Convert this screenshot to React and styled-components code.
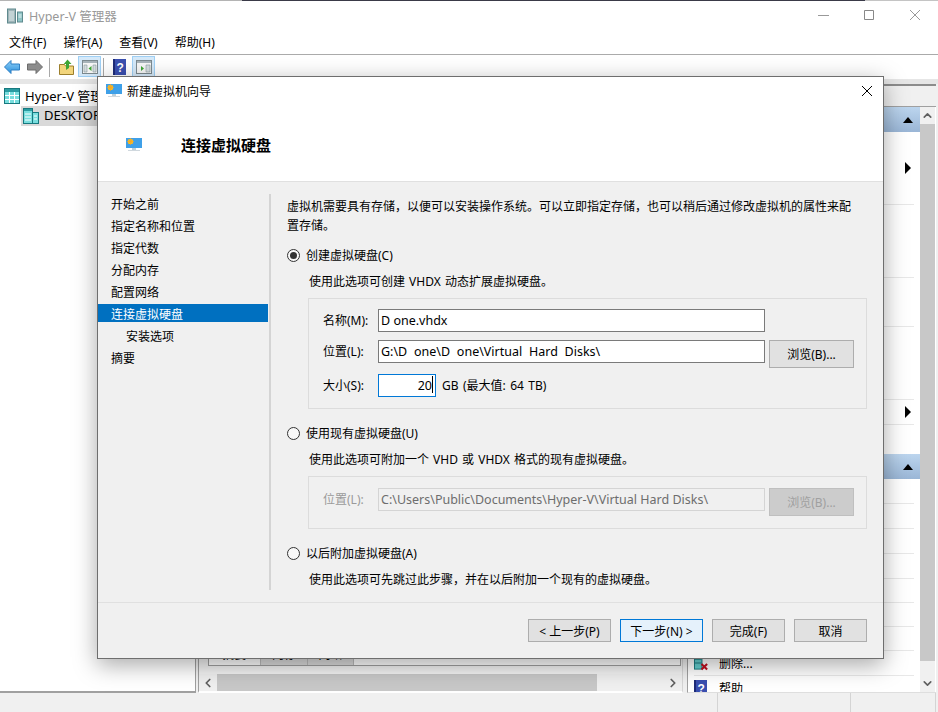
import React from 'react';
import styled, { createGlobalStyle } from 'styled-components';
import { ChevronUp, ChevronDown, ChevronLeft, ChevronRight } from 'lucide-react';

const GlobalStyle = createGlobalStyle`
  html, body { margin: 0; padding: 0; background: #f0f0f0; }
  * { box-sizing: border-box; }
  body {
    font-family: "Noto Sans", "Noto Sans CJK SC", sans-serif;
    font-size: 12px;
    color: #000;
  }
`;

// ######################### Main window ################################

const Screen = styled.div`
  position: relative;
  width: 938px;
  height: 712px;
  overflow: hidden;
  display: flex;
  flex-direction: column;
  background: #f0f0f0;
`;

const TopEdge = styled.div`
  height: 1px;
  flex: none;
  background: linear-gradient(to right, #b4b4b4 242px, #3a3a48 242px, #3a3a48 865px, #c4c4c4 865px);
`;

const TitleBar = styled.div`
  height: 29px;
  flex: none;
  background: #fff;
  display: flex;
  align-items: center;
  padding-left: 7px;
`;

const AppTitle = styled.span`
  margin-left: 6px;
  font-size: 12.5px;
  color: #999;
  flex: 1;
`;

const WinButton = styled.div`
  width: 46px;
  height: 29px;
  display: flex;
  align-items: center;
  justify-content: center;
  padding-bottom: 1px;
`;

const MenuBar = styled.div`
  height: 25px;
  flex: none;
  background: #fff;
  border-bottom: 1px solid #aaa;
  display: flex;
  align-items: center;
  gap: 17px;
  padding: 0 0 1px 9px;
`;

const ToolBar = styled.div`
  height: 24px;
  flex: none;
  background: #fff;
  display: flex;
  align-items: flex-start;
  padding: 1px 0 0 4px;
`;

const ToolIcon = styled.div`
  margin-left: ${p => p.$ml || 0}px;
  height: 21px;
  width: ${p => p.$w}px;
  display: flex;
  align-items: center;
  justify-content: center;
  ${p => p.$on && 'background: #d5e9f9; border: 1px solid #9fd0f5;'}
`;

const ToolSep = styled.div`
  margin-left: ${p => p.$ml}px;
  width: 1px;
  height: 19px;
  margin-top: 2px;
  background: #a8a8a8;
`;

const PaneBand = styled.div`
  height: 5px;
  flex: none;
  background: #e6e6e6;
`;

const Panes = styled.div`
  flex: 1;
  min-height: 0;
  display: flex;
`;

const TreePane = styled.div`
  width: 196px;
  flex: none;
  background: #fff;
  border-right: 1px solid #a0a0a0;
  border-bottom: 2px solid #a0a0a0;
  padding: 2px 0 0 4px;
`;

const TreeRow = styled.div`
  height: 20px;
  display: flex;
  align-items: center;
  gap: 5px;
  margin-left: ${p => p.$indent || 0}px;
  padding-left: ${p => (p.$selected ? 2 : 0)}px;
  background: ${p => (p.$selected ? '#d9d9d9' : 'transparent')};
  font-size: 13px;
  white-space: nowrap;
`;

const TreeLabel = styled.span`
  margin-top: -2px;
`;

const CenterPane = styled.div`
  width: 485px;
  flex: none;
  margin-left: 2px;
  background: #f3f3f3;
  border-left: 1px solid #a0a0a0;
  border-right: 1px solid #d6d6d6;
  border-bottom: 2px solid #fff;
  display: flex;
  flex-direction: column;
`;

const TabBox = styled.div`
  flex: 1;
  margin: 0 1px 0 9px;
  background: #fff;
  border: 1px solid #a0a0a0;
  display: flex;
  align-items: flex-end;
`;

const BottomTab = styled.div`
  width: ${p => p.$w}px;
  height: 26px;
  padding-top: 6px;
  text-align: center;
  background: ${p => (p.$active ? '#fff' : '#dcdcdc')};
  border-right: 1px solid #bdbdbd;
`;

const HScroll = styled.div`
  height: 17px;
  flex: none;
  margin-top: 8px;
  display: flex;
  align-items: stretch;
  background: #f0f0f0;
`;

const HThumb = styled.div`
  width: 380px;
  background: #c8c8c8;
`;

const ScrollArrow = styled.div`
  width: ${p => p.$w || 18}px;
  height: ${p => p.$h || 'auto'};
  padding-top: ${p => p.$pt || 0}px;
  flex: none;
  display: flex;
  align-items: center;
  justify-content: center;
  color: #606060;
`;

const Spacer = styled.div`
  flex: 1;
`;

const ActionPane = styled.div`
  width: 249px;
  flex: none;
  margin-left: 4px;
  background: #fff;
  border-left: 1px solid #a0a0a0;
  border-bottom: 1px solid #dedede;
  display: flex;
  flex-direction: column;
  overflow: hidden;
`;

const ActionHead = styled.div`
  height: 23px;
  flex: none;
  background: #f0f0f0;
  border-top: 2px solid #8c8c8c;
  border-bottom: 1px solid #a0a0a0;
`;

const ActionBody = styled.div`
  flex: 1;
  min-height: 0;
  display: flex;
`;

const ActionList = styled.div`
  width: 232px;
  flex: none;
  overflow: hidden;
`;

const BlueHead = styled.div`
  height: 25px;
  background: linear-gradient(#bcd5ee, #9ab6d6);
  display: flex;
  align-items: center;
  justify-content: flex-end;
  padding-right: 7px;
`;

const ActionRow = styled.div`
  height: ${p => p.$h}px;
  margin: 0 6px 0 6px;
  display: flex;
  align-items: center;
  gap: 10px;
  padding-right: 3px;
  border-bottom: 1px solid ${p => (p.$plain ? 'transparent' : '#e8e8e8')};
  white-space: nowrap;
`;

const ActionIcon = styled.span`
  width: 15px;
  flex: none;
  display: flex;
`;

const ActionText = styled.span`
  flex: 1;
`;

const VScroll = styled.div`
  width: 15px;
  flex: none;
  display: flex;
  flex-direction: column;
  background: #f0f0f0;
`;

const VThumb = styled.div`
  flex: 1;
  background: #c8c8c8;
`;

const StatusBar = styled.div`
  height: 19px;
  flex: none;
  background: #f0f0f0;
  display: flex;
`;

const StatusCell = styled.div`
  width: ${p => p.$w}px;
  flex: none;
  border-right: 1px solid #d4d4d4;
`;

// ######################### Wizard dialog ################################

const Dialog = styled.div`
  position: absolute;
  left: 97px;
  top: 76px;
  width: 787px;
  height: 583px;
  background: #f0f0f0;
  border: 1px solid #6e6e6e;
  box-shadow: 0 6px 22px rgba(0, 0, 0, 0.34);
  display: flex;
  flex-direction: column;
`;

const DialogHead = styled.div`
  height: 105px;
  flex: none;
  background: #fff;
  border-bottom: 1px solid #e0e0e0;
`;

const DialogTitle = styled.div`
  height: 28px;
  display: flex;
  align-items: center;
  padding: 0 10px 0 8px;
  gap: 5px;
`;

const DialogTitleText = styled.span`
  flex: 1;
`;

const HeadLine = styled.div`
  display: flex;
  align-items: center;
  height: 24px;
  margin-top: 28px;
  padding-left: 28px;
`;

const Heading = styled.h1`
  margin: 0 0 0 39px;
  font-size: 15px;
  font-weight: 700;
  line-height: 24px;
`;

const DialogBody = styled.div`
  height: 420px;
  flex: none;
  display: flex;
  padding: 12px 0;
`;

const Steps = styled.div`
  width: 173px;
  flex: none;
  border-right: 2px solid #d4d4d4;
`;

const Step = styled.div`
  height: 18px;
  line-height: 21px;
  margin: 0 1px 4px 0;
  padding-left: ${p => (p.$sub ? 28 : 13)}px;
  background: ${p => (p.$active ? '#0070c0' : 'transparent')};
  color: ${p => (p.$active ? '#fff' : '#000')};
`;

const Main = styled.div`
  flex: 1;
  padding: 3px 16px 0 16px;
`;

const Intro = styled.p`
  margin: 0;
  line-height: 19px;
`;

const RadioRow = styled.label`
  display: flex;
  align-items: center;
  gap: 6px;
  height: 18px;
  margin-top: ${p => p.$mt}px;
`;

const RadioMark = styled.span`
  width: 13px;
  height: 13px;
  flex: none;
  border: 1px solid #333;
  border-radius: 50%;
  background: #f8f8f8;
  display: flex;
  align-items: center;
  justify-content: center;
  &::after {
    content: '';
    width: 7px;
    height: 7px;
    border-radius: 50%;
    background: ${p => (p.$on ? '#333' : 'transparent')};
  }
`;

const Hint = styled.div`
  height: 18px;
  line-height: 18px;
  margin-top: ${p => p.$mt}px;
  padding-left: 22px;
  word-spacing: 1px;
`;

const Group = styled.div`
  margin: ${p => p.$mt}px 0 0 21px;
  padding: ${p => p.$pad};
  border: 1px solid #dcdcdc;
`;

const FieldRow = styled.div`
  display: flex;
  align-items: flex-start;
  height: ${p => p.$h}px;
  margin-bottom: ${p => p.$mb || 0}px;
`;

const FieldLabel = styled.span`
  width: 55px;
  flex: none;
  line-height: 23px;
  color: ${p => (p.$off ? '#9a9a9a' : '#000')};
`;

const Field = styled.div`
  position: relative;
  width: ${p => p.$w}px;
  height: 23px;
  line-height: 21px;
  flex: none;
  padding: 0 2px 0 2px;
  font-size: 12.5px;
  word-spacing: ${p => p.$ws || 0}px;
  white-space: nowrap;
  overflow: hidden;
  text-align: ${p => (p.$focus ? 'right' : 'left')};
  background: ${p => (p.$off ? '#f0f0f0' : '#fff')};
  border: 1px solid ${p => (p.$focus ? '#0078d7' : p.$off ? '#d4d4d4' : '#7a7a7a')};
  color: ${p => (p.$off ? '#6d6d6d' : '#000')};
`;

const Caret = styled.span`
  display: inline-block;
  width: 1px;
  height: 17px;
  margin-left: 0;
  background: #000;
  vertical-align: -3px;
`;

const Unit = styled.span`
  margin-left: 6px;
  line-height: 23px;
  word-spacing: 1.3px;
`;

const Button = styled.button`
  width: ${p => p.$w}px;
  height: ${p => p.$h || 23}px;
  flex: none;
  margin-left: ${p => p.$ml || 0}px;
  padding: 0;
  font: inherit;
  color: ${p => (p.disabled ? '#a0a0a0' : '#000')};
  background: ${p => (p.disabled ? '#cccccc' : p.$primary ? '#e5f1fb' : '#e1e1e1')};
  border: 1px solid ${p => (p.disabled ? '#bfbfbf' : p.$primary ? '#0078d7' : '#adadad')};
`;

const DialogFoot = styled.div`
  flex: 1;
  border-top: 1px solid #e0e0e0;
  display: flex;
  justify-content: flex-end;
  gap: 9px;
  padding: 16px 16px 0 0;
`;

// ############################# Icons ################################

const Lines = ({ d, color }) => (
  <svg width="12" height="12" viewBox="0 0 12 12" fill="none" stroke={color} strokeWidth="1">
    <path d={d} />
  </svg>
);

const AppIcon = () => (
  <svg width="16" height="16" viewBox="0 0 16 16">
    <rect x="0.5" y="1" width="8" height="14" fill="#9fb4b8" stroke="#5f8a8e" />
    <path d="M2 4h5M2 6h5M2 8h5M2 10h5M2 12h5" stroke="#e6f1f1" />
    <rect x="10.5" y="4" width="5" height="10" fill="#8fc4c6" stroke="#5f8a8e" />
    <path d="M11.5 7h3M11.5 9h3" stroke="#e8f4f4" />
  </svg>
);

const ManagerIcon = () => (
  <svg width="16" height="16" viewBox="0 0 16 16">
    <rect x="0.5" y="0.5" width="15" height="15" fill="#79dede" stroke="#17797f" />
    <rect x="1" y="1" width="14" height="3" fill="#2a9ca2" />
    <path d="M1 7.5h14M1 11.5h14M5.5 4v11M10.5 4v11" stroke="#fff" />
  </svg>
);

const HostIcon = () => (
  <svg width="16" height="16" viewBox="0 0 16 16">
    <rect x="0.5" y="0.5" width="9" height="15" fill="#79dede" stroke="#17797f" />
    <rect x="1" y="1" width="8" height="2" fill="#2a9ca2" />
    <path d="M2 6h6M2 9h6M2 12h6" stroke="#fff" />
    <rect x="9.5" y="4.5" width="6" height="11" fill="#79dede" stroke="#17797f" />
    <path d="M11 8h3M11 11h3" stroke="#fff" />
  </svg>
);

const ArrowIcon = ({ back }) => (
  <svg width="16" height="14" viewBox="0 0 16 14">
    <defs>
      <linearGradient id="backFill" x1="0" y1="0" x2="0" y2="1">
        <stop offset="0" stopColor="#8fd0f8" />
        <stop offset="1" stopColor="#2a8fdc" />
      </linearGradient>
    </defs>
    <path
      d={back ? 'M0.5 7 7 0.5V4h8.5v6H7v3.5z' : 'M15.5 7 9 0.5V4H0.5v6H9v3.5z'}
      fill={back ? 'url(#backFill)' : '#8c8c8c'}
      stroke={back ? '#2d7fc4' : '#6c6c6c'}
    />
  </svg>
);

const FolderUpIcon = () => (
  <svg width="15" height="16" viewBox="0 0 15 16">
    <path d="M0.5 5.5h5l1 1.5h8v8.5H0.5z" fill="#f2d57c" stroke="#9c7f2c" />
    <path d="M7 11V5H4.8L8.5 0.5 12.5 5H10v4z" fill="#3fa535" />
  </svg>
);

const PanelIcon = ({ side }) => (
  <svg width="16" height="14" viewBox="0 0 16 14">
    <rect x="0.5" y="0.5" width="15" height="13" fill="#f6f6f6" stroke="#7c8a90" />
    <rect x="1" y="1" width="14" height="2" fill="#a8b4ba" />
    {side === 'left' ? (
      <>
        <path d="M2 5h3v7H2zM11 5h3v7h-3z" fill="#d5dde0" stroke="#8a9aa0" strokeWidth="0.6" />
        <path d="M9.5 6v5L6.5 8.5z" fill="#3fa535" />
      </>
    ) : (
      <>
        <path d="M10 5h4v7h-4z" fill="#d5dde0" stroke="#8a9aa0" strokeWidth="0.6" />
        <path d="M5 6v5l3-2.5z" fill="#3fa535" />
      </>
    )}
  </svg>
);

const HelpIcon = () => (
  <svg width="13" height="16" viewBox="0 0 13 16">
    <rect width="13" height="16" fill="#3a4fb0" />
    <rect width="2" height="16" fill="#1e2c78" />
    <text x="3.4" y="12.5" fontSize="12" fontWeight="700" fill="#fff" fontFamily="Liberation Sans, sans-serif">?</text>
  </svg>
);

const WizardIcon = () => (
  <svg width="16" height="14" viewBox="0 0 16 14">
    <rect x="0" y="0" width="16" height="10" fill="#3fa0e8" />
    <circle cx="4.5" cy="3.5" r="2.6" fill="#f7c325" />
    <path d="M4.5 0v7M1 3.5h7M2 1l5 5M7 1 2 6" stroke="#f7a325" strokeWidth="0.7" />
    <rect x="6" y="10" width="4" height="2" fill="#bcd0dc" />
    <rect x="2" y="12" width="12" height="1" fill="#d0d8de" />
  </svg>
);

const DeleteIcon = () => (
  <svg width="16" height="16" viewBox="0 0 16 16">
    <rect x="0.5" y="0.5" width="8" height="14" fill="#64cfcf" stroke="#17797f" />
    <path d="M1 4h7M1 8h7" stroke="#17797f" />
    <path d="M8 9l6 6M14 9l-6 6" stroke="#c01020" strokeWidth="2.2" />
  </svg>
);

const SmallTri = ({ dir }) => (
  <svg width={dir === 'up' ? 10 : 6} height={dir === 'up' ? 6 : 12} viewBox={dir === 'up' ? '0 0 10 6' : '0 0 6 12'}>
    <polygon points={dir === 'up' ? '0,6 5,0 10,6' : '0,0 6,6 0,12'} fill="#000" />
  </svg>
);

//############################# Data ################################

const menus = ['文件(F)', '操作(A)', '查看(V)', '帮助(H)'];

const steps = [
  { label: '开始之前' },
  { label: '指定名称和位置' },
  { label: '指定代数' },
  { label: '分配内存' },
  { label: '配置网络' },
  { label: '连接虚拟硬盘', active: true },
  { label: '安装选项', sub: true },
  { label: '摘要' },
];

const upperRows = [
  { h: 73, arrow: true },
  { h: 73 },
  { h: 49 },
  { h: 73 },
  { h: 25, arrow: true },
  { h: 29, plain: true },
];

const lowerRows = [{ h: 25 }, { h: 25 }, { h: 25 }, { h: 25 }, { h: 24 }, { h: 24 }, { h: 24 }];

//############################# Component ################################

const App = () => (
  <Screen>
    <GlobalStyle />
    <TopEdge />
    <TitleBar>
      <AppIcon />
      <AppTitle>Hyper-V 管理器</AppTitle>
      <WinButton><Lines d="M1 6.5h11" color="#999" /></WinButton>
      <WinButton><Lines d="M1.5 1.5h9v9h-9z" color="#888" /></WinButton>
      <WinButton><Lines d="M1 1l10 10M11 1 1 11" color="#999" /></WinButton>
    </TitleBar>
    <MenuBar>
      {menus.map(m => <span key={m}>{m}</span>)}
    </MenuBar>
    <ToolBar>
      <ToolIcon $w={16}><ArrowIcon back /></ToolIcon>
      <ToolIcon $w={16} $ml={7}><ArrowIcon /></ToolIcon>
      <ToolSep $ml={6} />
      <ToolIcon $w={15} $ml={9}><FolderUpIcon /></ToolIcon>
      <ToolIcon $w={23} $ml={4} $on><PanelIcon side="left" /></ToolIcon>
      <ToolSep $ml={2} />
      <ToolIcon $w={13} $ml={9}><HelpIcon /></ToolIcon>
      <ToolIcon $w={23} $ml={6} $on><PanelIcon side="right" /></ToolIcon>
    </ToolBar>
    <PaneBand />
    <Panes>
      <TreePane>
        <TreeRow><ManagerIcon /><TreeLabel>Hyper-V 管理器</TreeLabel></TreeRow>
        <TreeRow $indent={17} $selected><HostIcon /><TreeLabel>DESKTOP-PC</TreeLabel></TreeRow>
      </TreePane>
      <CenterPane>
        <TabBox>
          <BottomTab $w={52} $active>摘要</BottomTab>
          <BottomTab $w={47}>内存</BottomTab>
          <BottomTab $w={46}>网络</BottomTab>
        </TabBox>
        <HScroll>
          <ScrollArrow $w={18}><ChevronLeft size={14} strokeWidth={3} /></ScrollArrow>
          <HThumb />
          <Spacer />
          <ScrollArrow $w={18}><ChevronRight size={14} strokeWidth={3} /></ScrollArrow>
        </HScroll>
      </CenterPane>
      <ActionPane>
        <ActionHead />
        <ActionBody>
          <ActionList>
            <BlueHead><SmallTri dir="up" /></BlueHead>
            {upperRows.map((r, i) => (
              <ActionRow key={i} $h={r.h} $plain={r.plain}>
                <Spacer />
                {r.arrow && <SmallTri dir="right" />}
              </ActionRow>
            ))}
            <BlueHead><SmallTri dir="up" /></BlueHead>
            {lowerRows.map((r, i) => <ActionRow key={i} $h={r.h} />)}
            <ActionRow $h={25}><ActionIcon><DeleteIcon /></ActionIcon><ActionText>删除...</ActionText></ActionRow>
            <ActionRow $h={24} $plain><ActionIcon><HelpIcon /></ActionIcon><ActionText>帮助</ActionText></ActionRow>
          </ActionList>
          <VScroll>
            <ScrollArrow $w={15} $h="17px"><ChevronUp size={13} strokeWidth={3} /></ScrollArrow>
            <VThumb />
            <ScrollArrow $w={15} $h="31px" $pt={14}><ChevronDown size={13} strokeWidth={3} /></ScrollArrow>
          </VScroll>
        </ActionBody>
      </ActionPane>
    </Panes>
    <StatusBar>
      <StatusCell $w={718} />
      <StatusCell $w={133} />
      <StatusCell $w={85} />
    </StatusBar>

    <Dialog>
      <DialogHead>
        <DialogTitle>
          <WizardIcon />
          <DialogTitleText>新建虚拟机向导</DialogTitleText>
          <Lines d="M1 1l10 10M11 1 1 11" color="#000" />
        </DialogTitle>
        <HeadLine>
          <WizardIcon />
          <Heading>连接虚拟硬盘</Heading>
        </HeadLine>
      </DialogHead>
      <DialogBody>
        <Steps>
          {steps.map(s => (
            <Step key={s.label} $active={s.active} $sub={s.sub}>{s.label}</Step>
          ))}
        </Steps>
        <Main>
          <Intro>
            虚拟机需要具有存储，以便可以安装操作系统。可以立即指定存储，也可以稍后通过修改虚拟机的属性来配<br />
            置存储。
          </Intro>
          <RadioRow $mt={11}><RadioMark $on />创建虚拟硬盘(C)</RadioRow>
          <Hint $mt={9}>使用此选项可创建 VHDX 动态扩展虚拟硬盘。</Hint>
          <Group $mt={7} $pad="10px 12px 11px 14px">
            <FieldRow $h={23} $mb={8}>
              <FieldLabel>名称(M):</FieldLabel>
              <Field $w={387}>D one.vhdx</Field>
            </FieldRow>
            <FieldRow $h={28} $mb={6}>
              <FieldLabel>位置(L):</FieldLabel>
              <Field $w={387} $ws={3.5}>G:\D one\D one\Virtual Hard Disks\</Field>
              <Button $w={85} $h={28} $ml={4}>浏览(B)...</Button>
            </FieldRow>
            <FieldRow $h={23}>
              <FieldLabel>大小(S):</FieldLabel>
              <Field $w={58} $focus>20<Caret /></Field>
              <Unit>GB (最大值: 64 TB)</Unit>
            </FieldRow>
          </Group>
          <RadioRow $mt={15}><RadioMark />使用现有虚拟硬盘(U)</RadioRow>
          <Hint $mt={9}>使用此选项可附加一个 VHD 或 VHDX 格式的现有虚拟硬盘。</Hint>
          <Group $mt={7} $pad="11px 12px 12px 14px">
            <FieldRow $h={28}>
              <FieldLabel $off>位置(L):</FieldLabel>
              <Field $w={387} $off>C:\Users\Public\Documents\Hyper-V\Virtual Hard Disks\</Field>
              <Button $w={85} $h={28} $ml={4} disabled>浏览(B)...</Button>
            </FieldRow>
          </Group>
          <RadioRow $mt={15}><RadioMark />以后附加虚拟硬盘(A)</RadioRow>
          <Hint $mt={9}>使用此选项可先跳过此步骤，并在以后附加一个现有的虚拟硬盘。</Hint>
        </Main>
      </DialogBody>
      <DialogFoot>
        <Button $w={83}>&lt; 上一步(P)</Button>
        <Button $w={83} $primary>下一步(N) &gt;</Button>
        <Button $w={73}>完成(F)</Button>
        <Button $w={73}>取消</Button>
      </DialogFoot>
    </Dialog>
  </Screen>
);

export default App;
